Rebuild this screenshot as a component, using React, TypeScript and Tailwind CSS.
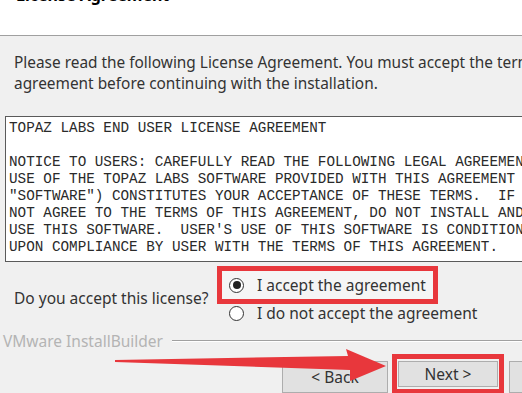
const licenseLines = [
  "TOPAZ LABS END USER LICENSE AGREEMENT",
  "",
  "NOTICE TO USERS: CAREFULLY READ THE FOLLOWING LEGAL AGREEMENT. USE OF",
  "USE OF THE TOPAZ LABS SOFTWARE PROVIDED WITH THIS AGREEMENT (THE",
  "\"SOFTWARE\") CONSTITUTES YOUR ACCEPTANCE OF THESE TERMS.  IF YOU DO",
  "NOT AGREE TO THE TERMS OF THIS AGREEMENT, DO NOT INSTALL AND/OR",
  "USE THIS SOFTWARE.  USER'S USE OF THIS SOFTWARE IS CONDITIONED",
  "UPON COMPLIANCE BY USER WITH THE TERMS OF THIS AGREEMENT.",
];

function Radio({ checked }: { checked?: boolean }) {
  return (
    <span className="w-[15px] h-[15px] rounded-full border border-[#333] bg-white flex items-center justify-center shrink-0">
      {checked && <span className="w-[8px] h-[8px] rounded-full bg-[#222]" />}
    </span>
  );
}

export default function App() {
  return (
    <div
      className="relative w-[522px] h-[393px] overflow-hidden bg-[#f0f0f0] text-[#333] text-[15.5px]"
      style={{ fontFamily: '"Noto Sans", "Open Sans", sans-serif' }}
    >
      {/* header */}
      <div className="flow-root h-[36px] bg-white border-b border-[#a0a0a0]">
        <div className="relative -top-[15px] pl-[16px] text-[16px] font-bold text-black leading-[20px] whitespace-nowrap">
          License Agreement
        </div>
      </div>

      <p className="px-[14px] pt-[16px] text-[15.4px] leading-[21px] whitespace-nowrap">
        Please read the following License Agreement. You must accept the terms of this
        <br />
        agreement before continuing with the installation.
      </p>

      {/* license text */}
      <div className="ml-[5px] mt-[22px] w-[540px] h-[146px] border border-[#5a5a5a] bg-white pl-[3px] pt-[3px] overflow-hidden">
        <pre
          className="text-[14.3px] leading-[17px] text-[#2a2a2a]"
          style={{ fontFamily: '"Liberation Mono", "Courier New", monospace' }}
        >
          {licenseLines.map((l, i) => (
            <div key={i} className="h-[17px] whitespace-pre">
              {l}
            </div>
          ))}
        </pre>
      </div>

      {/* accept */}
      <div className="flex">
        <div className="w-[217px] shrink-0 pl-[14px] mt-[26px] leading-[20px] whitespace-nowrap">
          Do you accept this license?
        </div>
        <div className="flex flex-col">
          <div className="mt-[4px] w-[221px] h-[38px] border-[5px] border-[#e8373c] flex items-center pl-[7px] gap-[13px] bg-[#f5f5f5]">
            <Radio checked />
            <span className="leading-[20px] whitespace-nowrap">I accept the agreement</span>
          </div>
          <div className="h-[18px] flex items-center pl-[12px] gap-[13px]">
            <Radio />
            <span className="leading-[20px] whitespace-nowrap">I do not accept the agreement</span>
          </div>
        </div>
      </div>

      {/* footer brand */}
      <div className="mt-[9px] h-[20px] flex items-center pl-[3px]">
        <span className="text-[#b4b4b4] leading-[20px] whitespace-nowrap">VMware InstallBuilder</span>
        <div className="flex-1 ml-[9px] border-t border-[#a0a0a0] border-b border-b-white" />
      </div>

      {/* buttons */}
      <div className="mt-[3px] flex items-start pl-[282px]">
        <button className="shrink-0 mt-[7px] w-[106px] h-[32px] bg-[#e1e1e1] border border-[#adadad] leading-[28px]">
          &lt; Back
        </button>
        <div className="shrink-0 ml-[4px] w-[112px] h-[40px] border-[5px] border-[#e8373c] px-[1px] pt-[2px]">
          <button className="w-full h-[26px] bg-[#e1e1e1] border border-[#adadad] leading-[24px]">
            Next &gt;
          </button>
        </div>
        <button className="shrink-0 ml-[5px] mt-[7px] w-[100px] h-[32px] bg-[#e1e1e1] border border-[#adadad]" />
      </div>

      {/* annotation arrow */}
      <svg className="absolute left-0 top-0 pointer-events-none" width="522" height="393">
        <polygon
          points="115,360 348,356 346,349 386,366 350,381 350,370 115,362"
          fill="#e8373c"
        />
      </svg>
    </div>
  );
}
